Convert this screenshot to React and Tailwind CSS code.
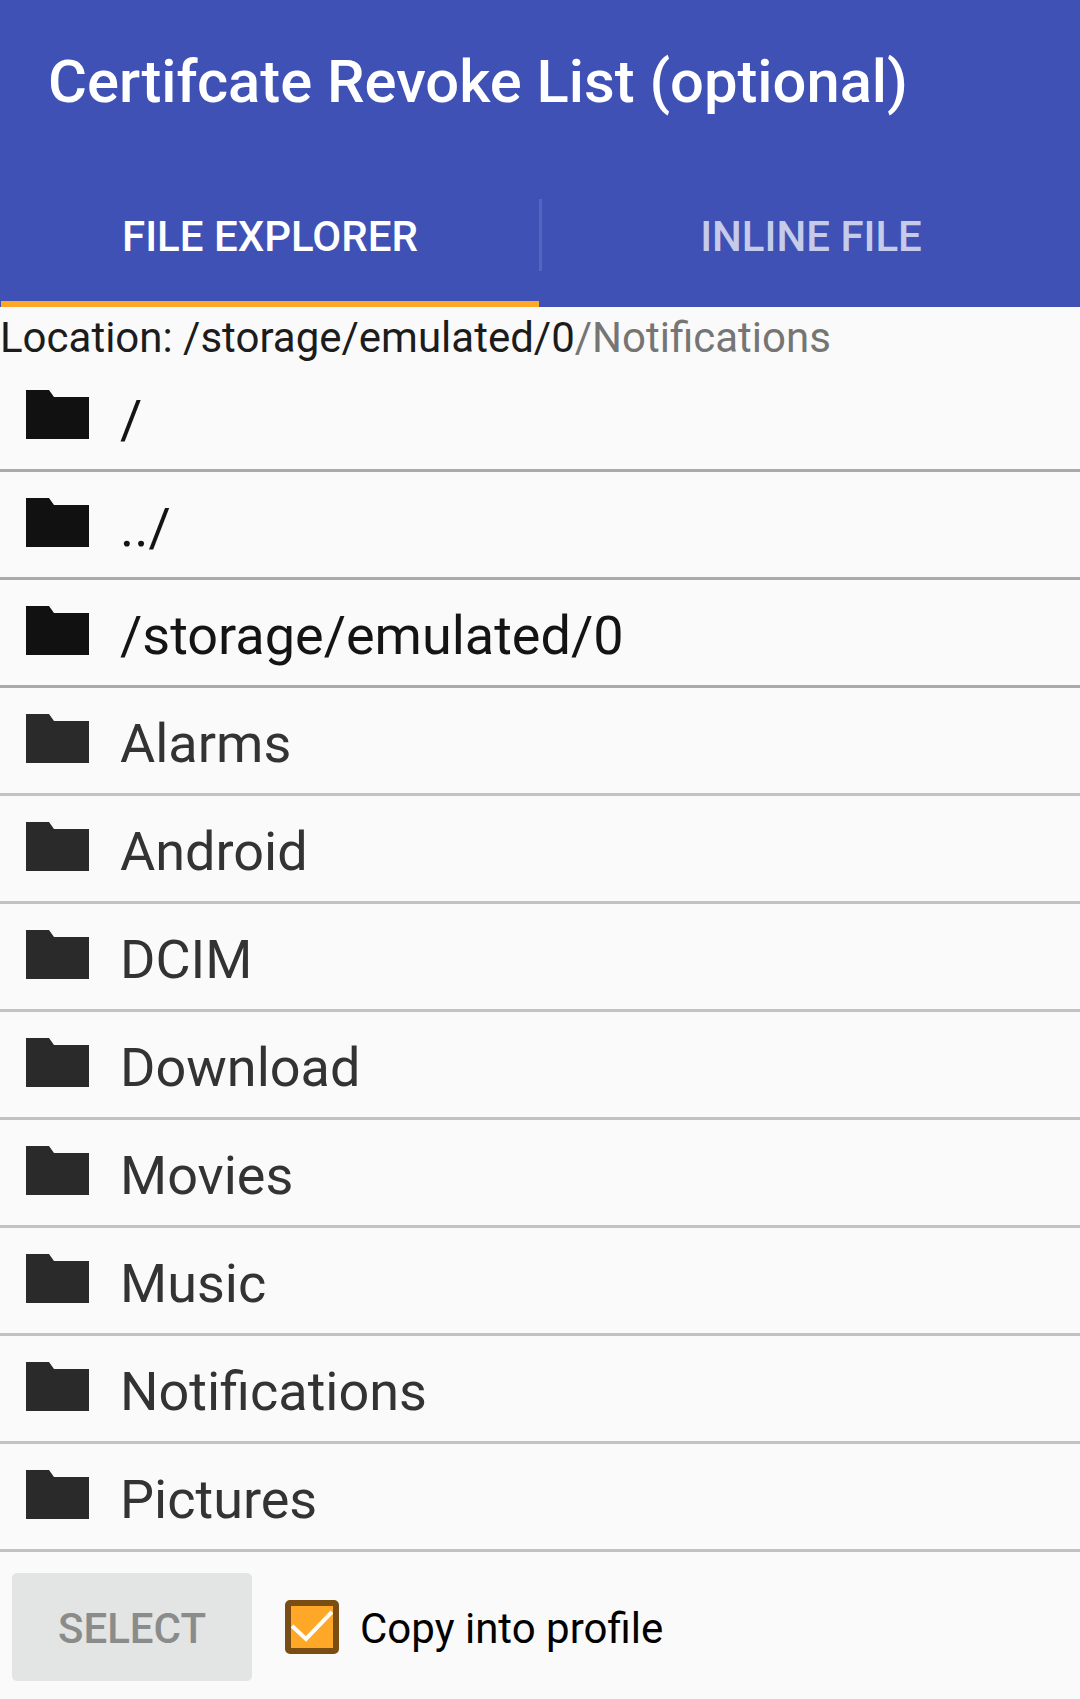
const dark = ["/", "../", "/storage/emulated/0"];
const normal = ["Alarms", "Android", "DCIM", "Download", "Movies", "Music", "Notifications", "Pictures"];

function Folder({ className }) {
  return (
    <svg viewBox="0 0 63 49" className={`mt-[26px] h-[49px] w-[63px] shrink-0 ${className}`} fill="currentColor">
      <path d="M0 0H23L28 7H63V49H0Z" />
    </svg>
  );
}

function Row({ label, isDark }) {
  return (
    <div className={`flex h-[108px] items-start border-b-[3px] pl-[26px] ${isDark ? "border-[#aaaaaa]" : "border-[#c2c2c2]"}`}>
      <Folder className={isDark ? "text-[#111111]" : "text-[#2a2a2a]"} />
      <span className={`ml-[31px] mt-[29px] text-[54px] leading-none ${isDark ? "text-[#141414]" : "text-[#333333]"}`}>{label}</span>
    </div>
  );
}

export default function App() {
  return (
    <div className="flex h-[1699px] w-[1080px] flex-col overflow-hidden bg-[#fafafa] font-[Roboto,sans-serif]">
      <header className="h-[307px] shrink-0 bg-[#3f51b5]">
        <h1 className="h-[199px] pl-[48px] pt-[46px] text-[59.7px] leading-[72px] font-medium text-white">Certifcate Revoke List (optional)</h1>
        <div className="flex h-[108px]">
          <div className="ml-[1px] flex h-full w-[538px] items-start justify-center border-b-[6px] border-[#ffa726] pt-[13px] text-[42px] leading-[50px] font-medium text-white">FILE EXPLORER</div>
          <div className="h-[72px] w-[3px] bg-[#5265c0]" />
          <div className="flex flex-1 justify-center pt-[13px] text-[42px] leading-[50px] font-medium text-[#c5cbe9]">INLINE FILE</div>
        </div>
      </header>
      <div className="h-[57px] shrink-0 pt-[6px] text-[42px] leading-[50px] text-[#1c1c1c]">
        Location: /storage/emulated/0<span className="text-[#757575]">/Notifications</span>
      </div>
      <div className="shrink-0">
        {dark.map((l) => <Row key={l} label={l} isDark />)}
        {normal.map((l) => <Row key={l} label={l} />)}
      </div>
      <div className="flex flex-1 items-start pl-[12px] pt-[21px]">
        <button className="h-[108px] w-[240px] rounded-[5px] bg-[#e3e4e4] pt-[2px] text-[42px] font-medium text-[#8a8b8b]">SELECT</button>
        <div className="ml-[33px] mt-[27px] flex h-[54px] w-[54px] items-center justify-center rounded-[5px] border-[6px] border-[#7a4e12] bg-[#ffa726]">
          <svg viewBox="0 0 42 42" className="h-[42px] w-[42px]" fill="none" stroke="white" strokeWidth="4">
            <path d="M1 20L15 33L41 6" />
          </svg>
        </div>
        <span className="ml-[21px] mt-[29px] text-[42px] leading-[54px] text-black">Copy into profile</span>
      </div>
    </div>
  );
}
